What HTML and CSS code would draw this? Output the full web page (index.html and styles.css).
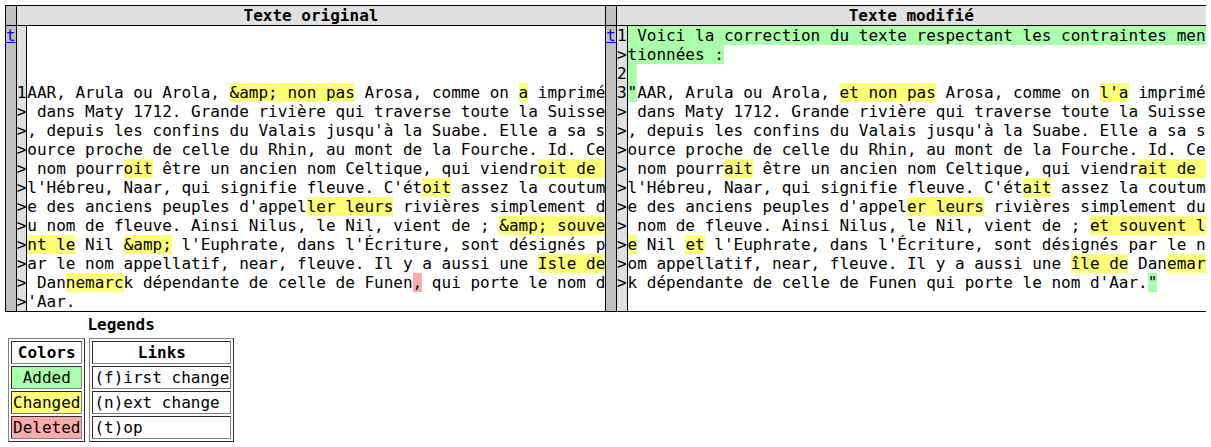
FILE: index.html
```html
<!DOCTYPE html>
<html>
<head>
<meta charset="utf-8">
<title>Diff</title>
<link rel="stylesheet" href="styles.css">
</head>
<body>
<table class="diff">
<thead>
<tr><th class="diff_next"></th><th colspan="2" class="diff_header head">Texte original</th><th class="diff_next"></th><th colspan="2" class="diff_header head">Texte modifié</th></tr>
</thead>
<tbody>
<tr><td class="diff_next"><a href="#top">t</a></td><td class="diff_header"></td><td class="txt"></td><td class="diff_next"><a href="#top">t</a></td><td class="diff_header">1</td><td class="txt"><span class="diff_add"> Voici la correction du texte respectant les contraintes men</span></td></tr>
<tr><td class="diff_next"></td><td class="diff_header"></td><td class="txt"></td><td class="diff_next"></td><td class="diff_header">&gt;</td><td class="txt"><span class="diff_add">tionnées :</span></td></tr>
<tr><td class="diff_next"></td><td class="diff_header"></td><td class="txt"></td><td class="diff_next"></td><td class="diff_header">2</td><td class="txt"><span class="diff_add">&nbsp;</span></td></tr>
<tr><td class="diff_next"></td><td class="diff_header">1</td><td class="txt">AAR, Arula ou Arola, <span class="diff_chg">&amp;amp; non pas</span> Arosa, comme on <span class="diff_chg">a</span> imprimé</td><td class="diff_next"></td><td class="diff_header">3</td><td class="txt"><span class="diff_add">"</span>AAR, Arula ou Arola, <span class="diff_chg">et non pas</span> Arosa, comme on <span class="diff_chg">l'a</span> imprimé</td></tr>
<tr><td class="diff_next"></td><td class="diff_header">&gt;</td><td class="txt"> dans Maty 1712. Grande rivière qui traverse toute la Suisse</td><td class="diff_next"></td><td class="diff_header">&gt;</td><td class="txt"> dans Maty 1712. Grande rivière qui traverse toute la Suisse</td></tr>
<tr><td class="diff_next"></td><td class="diff_header">&gt;</td><td class="txt">, depuis les confins du Valais jusqu'à la Suabe. Elle a sa s</td><td class="diff_next"></td><td class="diff_header">&gt;</td><td class="txt">, depuis les confins du Valais jusqu'à la Suabe. Elle a sa s</td></tr>
<tr><td class="diff_next"></td><td class="diff_header">&gt;</td><td class="txt">ource proche de celle du Rhin, au mont de la Fourche. Id. Ce</td><td class="diff_next"></td><td class="diff_header">&gt;</td><td class="txt">ource proche de celle du Rhin, au mont de la Fourche. Id. Ce</td></tr>
<tr><td class="diff_next"></td><td class="diff_header">&gt;</td><td class="txt"> nom pourr<span class="diff_chg">oit</span> être un ancien nom Celtique, qui viendr<span class="diff_chg">oit de </span></td><td class="diff_next"></td><td class="diff_header">&gt;</td><td class="txt"> nom pourr<span class="diff_chg">ait</span> être un ancien nom Celtique, qui viendr<span class="diff_chg">ait de </span></td></tr>
<tr><td class="diff_next"></td><td class="diff_header">&gt;</td><td class="txt">l'Hébreu, Naar, qui signifie fleuve. C'ét<span class="diff_chg">oit</span> assez la coutum</td><td class="diff_next"></td><td class="diff_header">&gt;</td><td class="txt">l'Hébreu, Naar, qui signifie fleuve. C'ét<span class="diff_chg">ait</span> assez la coutum</td></tr>
<tr><td class="diff_next"></td><td class="diff_header">&gt;</td><td class="txt">e des anciens peuples d'appel<span class="diff_chg">ler leurs</span> rivières simplement d</td><td class="diff_next"></td><td class="diff_header">&gt;</td><td class="txt">e des anciens peuples d'appel<span class="diff_chg">er leurs</span> rivières simplement du</td></tr>
<tr><td class="diff_next"></td><td class="diff_header">&gt;</td><td class="txt">u nom de fleuve. Ainsi Nilus, le Nil, vient de ; <span class="diff_chg">&amp;amp; souve</span></td><td class="diff_next"></td><td class="diff_header">&gt;</td><td class="txt"> nom de fleuve. Ainsi Nilus, le Nil, vient de ; <span class="diff_chg">et souvent l</span></td></tr>
<tr><td class="diff_next"></td><td class="diff_header">&gt;</td><td class="txt"><span class="diff_chg">nt le</span> Nil <span class="diff_chg">&amp;amp;</span> l'Euphrate, dans l'Écriture, sont désignés p</td><td class="diff_next"></td><td class="diff_header">&gt;</td><td class="txt"><span class="diff_chg">e</span> Nil <span class="diff_chg">et</span> l'Euphrate, dans l'Écriture, sont désignés par le n</td></tr>
<tr><td class="diff_next"></td><td class="diff_header">&gt;</td><td class="txt">ar le nom appellatif, near, fleuve. Il y a aussi une <span class="diff_chg">Isle de</span></td><td class="diff_next"></td><td class="diff_header">&gt;</td><td class="txt">om appellatif, near, fleuve. Il y a aussi une <span class="diff_chg">île de</span> Dan<span class="diff_chg">emar</span></td></tr>
<tr><td class="diff_next"></td><td class="diff_header">&gt;</td><td class="txt"> Dan<span class="diff_chg">nemarc</span>k dépendante de celle de Funen<span class="diff_sub">,</span> qui porte le nom d</td><td class="diff_next"></td><td class="diff_header">&gt;</td><td class="txt">k dépendante de celle de Funen qui porte le nom d'Aar.<span class="diff_add">"</span></td></tr>
<tr><td class="diff_next"></td><td class="diff_header">&gt;</td><td class="txt">'Aar.</td><td class="diff_next"></td><td class="diff_header"></td><td class="txt"></td></tr>
</tbody>
</table>
<table class="legend">
<tr><th colspan="2">Legends</th></tr>
<tr>
<td class="legend_cell">
<table class="boxed">
<tr><th>Colors</th></tr>
<tr><td class="diff_add">&nbsp;Added&nbsp;</td></tr>
<tr><td class="diff_chg">Changed</td></tr>
<tr><td class="diff_sub">Deleted</td></tr>
</table>
</td>
<td class="legend_cell">
<table class="boxed">
<tr><th>Links</th></tr>
<tr><td>(f)irst change</td></tr>
<tr><td>(n)ext change</td></tr>
<tr><td>(t)op</td></tr>
</table>
</td>
</tr>
</table>
</body>
</html>
```
FILE: styles.css
```css
body {
  margin: 5px;
  font-family: "DejaVu Sans Mono", monospace;
  font-size: 16px;
  color: #000;
  background: #fff;
}

table.diff {
  font-family: "DejaVu Sans Mono", monospace;
  font-size: 16px;
  border-collapse: collapse;
  border: 1px solid #000;
}

table.diff th,
table.diff td {
  padding: 0;
  line-height: 19px;
  height: 19px;
  border-left: 1px solid #000;
  border-right: 1px solid #000;
  white-space: pre;
}

table.diff thead th {
  border-bottom: 1px solid #000;
  font-weight: bold;
  text-align: center;
}

.diff_next {
  background-color: #c0c0c0;
}

.diff_header {
  background-color: #e0e0e0;
}

td.diff_header {
  text-align: right;
}

td.txt {
  text-align: left;
}

.diff_add {
  background-color: #aaffaa;
}

.diff_chg {
  background-color: #ffff77;
}

.diff_sub {
  background-color: #ffaaaa;
}

a {
  color: #0000ee;
  text-decoration: underline;
}

table.legend {
  font-family: "DejaVu Sans Mono", monospace;
  font-size: 16px;
  border-collapse: separate;
  border-spacing: 2px;
}

table.legend th,
table.legend td {
  padding: 1px;
}

table.legend > tbody > tr > td {
  vertical-align: middle;
}

table.boxed {
  border: 1px outset #808080;
  border-collapse: separate;
  border-spacing: 2px;
}

table.boxed th,
table.boxed td {
  border: 1px inset #808080;
  padding: 1px;
  text-align: left;
  white-space: pre;
}

table.boxed th {
  text-align: center;
  font-weight: bold;
}
```
